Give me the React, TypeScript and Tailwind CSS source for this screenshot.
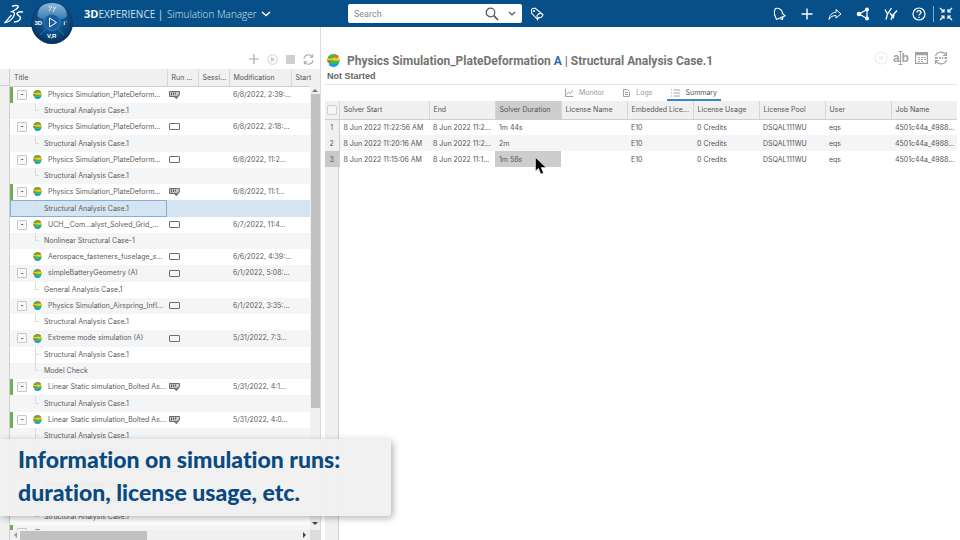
import type { ReactNode } from "react";

type Row = { title: string; child?: boolean; last?: boolean; leaf?: boolean; green?: boolean; run?: "queue" | "box"; date?: string; selected?: boolean };

const sac: Row = { title: "Structural Analysis Case.1", child: true, last: true };

const rows: Row[] = [
  { title: "Physics Simulation_PlateDeform...", green: true, run: "queue", date: "6/8/2022, 2:39:..." },
  sac,
  { title: "Physics Simulation_PlateDeform...", run: "box", date: "6/8/2022, 2:18:..." },
  sac,
  { title: "Physics Simulation_PlateDeform...", run: "box", date: "6/8/2022, 11:2..." },
  sac,
  { title: "Physics Simulation_PlateDeform...", green: true, run: "queue", date: "6/8/2022, 11:1..." },
  { ...sac, selected: true },
  { title: "UCH__Com...alyst_Solved_Grid_...", run: "box", date: "6/7/2022, 11:4..." },
  { title: "Nonlinear Structural Case-1", child: true, last: true },
  { title: "Aerospace_fasteners_fuselage_s...", leaf: true, run: "box", date: "6/6/2022, 4:39:..." },
  { title: "simpleBatteryGeometry (A)", run: "box", date: "6/1/2022, 5:08:..." },
  { title: "General Analysis Case.1", child: true, last: true },
  { title: "Physics Simulation_Airspring_Infl...", run: "box", date: "6/1/2022, 3:35:..." },
  sac,
  { title: "Extreme mode simulation (A)", run: "box", date: "5/31/2022, 7:3..." },
  { title: "Structural Analysis Case.1", child: true },
  { title: "Model Check", child: true, last: true },
  { title: "Linear Static simulation_Bolted As...", green: true, run: "queue", date: "5/31/2022, 4:1..." },
  sac,
  { title: "Linear Static simulation_Bolted As...", green: true, run: "queue", date: "5/31/2022, 4:0..." },
  { title: "Structural Analysis Case.1", child: true },
  { title: "Structural Analysis Case.2", child: true, last: true },
  { title: "Linear Static simulation_Bolted_...", run: "box", date: "5/31/2022, 3:5..." },
  sac,
  { title: "Linear Static simulation_Bolted_...", run: "box", date: "5/31/2022, 3:2..." },
  sac,
  { title: "", green: true },
];

const runs = [
  ["8 Jun 2022 11:22:56 AM", "8 Jun 2022 11:2...", "1m 44s"],
  ["8 Jun 2022 11:20:16 AM", "8 Jun 2022 11:2...", "2m"],
  ["8 Jun 2022 11:15:06 AM", "8 Jun 2022 11:1...", "1m 58s"],
];

const heads = ["Solver Start", "End", "Solver Duration", "License Name", "Embedded Lice...", "License Usage", "License Pool", "User", "Job Name"];

function Svg({ children, w = 14, h = 14, className = "" }: { children: ReactNode; w?: number; h?: number; className?: string }) {
  return (
    <svg width={w} height={h} viewBox={`0 0 ${w} ${h}`} fill="none" stroke="currentColor" strokeWidth="1.2" className={`shrink-0 ${className}`} aria-hidden="true">
      {children}
    </svg>
  );
}

function SimIcon({ size = 9 }: { size?: number }) {
  return (
    <svg width={size} height={size} viewBox="0 0 12 12" className="shrink-0" aria-hidden="true">
      <path d="M3 .8 7 0l3.500 1.500L9.500 4l2.500 1-1.500 5-4.500 2-4-1.500L1.500 8 0 6l1-3.500z" fill="#3dbb52" />
      <path d="M1.500 2.200 5.500 0 7 2 3.500 4z" fill="#57b436" />
      <path d="M6.500 0 10.500 1.500l.3 2-3.500.3L6 2.300z" fill="#f0672c" />
      <path d="M0 4l3.500.3L7 3.300l4.500 1.200.3 1.500L7.500 6.200 4 5.500 0 6.500z" fill="#f3d21c" />
      <path d="M0 5.500 2.500 5.800 3.500 7.300.8 8z" fill="#e5582c" />
      <path d="M2 9l4 .3 4.800-1L9 11.200 6 12l-3-1z" fill="#1d9be0" />
    </svg>
  );
}

function RunIcon({ kind }: { kind: "queue" | "box" }) {
  return kind === "box" ? (
    <Svg w={11} h={7}><rect x="0.500" y="0.500" width="10" height="6" rx="0.500" strokeWidth="1" /></Svg>
  ) : (
    <Svg w={11} h={9}>
      <path d="M.500 1.500h10v3L8 6.500H.500z" fill="#c9c9c9" strokeWidth="1" />
      <path d="M2.500 2.500v3M4.500 2.500v2.500M6.500 2.500v2" stroke="#5f5f5f" strokeWidth="1" />
      <path d="M5 6 7.500 8.300 10.500 4.500" strokeWidth="1.200" />
    </Svg>
  );
}

function IconButton({ label, children }: { label: string; children: ReactNode }) {
  return <button type="button" aria-label={label} className="flex size-4 items-center justify-center">{children}</button>;
}

function Header() {
  return (
    <header className="relative flex h-[27px] shrink-0 items-center bg-[#074f88] font-['Open_Sans',sans-serif] text-[10px] text-[#cfe3f0]">
      <Svg w={20} h={20} className="ml-1 text-white">
        <path d="M8 2.300C11 1 15 1.200 14.200 3 13.500 4.600 11 6 8.500 7.300" strokeWidth="1.400" />
        <path d="M6.500 7.800C10 7 11.500 9 9.500 12.500 7.500 16 4 18.300 1 18.500L7.500 11" strokeWidth="1.300" />
        <path d="M19 8c-3-.8-6 .2-6 1.800 0 1.700 3.800 2 3.500 4.200-.3 2.300-3.500 3.800-6.500 4" strokeWidth="1.500" />
      </Svg>
      <button type="button" aria-label="Compass" className="absolute top-0 left-[30px]">
        <svg width="44" height="45" viewBox="0 0 44 45" aria-hidden="true">
          <defs>
            <radialGradient id="ball" cx="50%" cy="40%" r="60%"><stop offset="0.300" stopColor="#1263a0" /><stop offset="1" stopColor="#062f5c" /></radialGradient>
            <linearGradient id="gloss" x1="0" y1="0" x2="0" y2="1"><stop offset="0" stopColor="#8cb8da" /><stop offset="1" stopColor="#3a7db2" /></linearGradient>
          </defs>
          <circle cx="22" cy="23" r="21" fill="url(#ball)" />
          <path d="M7.500 16C7.500 6 15 3 22 3s15 3 15 13c-2 3-5 3-7 3-2-3-5-4.500-8-4.500S16 16 14 19c-3 0-5-1-6.500-3z" fill="url(#gloss)" />
          <circle cx="22" cy="22.500" r="8" fill="#175f9c" stroke="#3f83b8" strokeWidth="0.800" />
          <path d="M10 35l6-6M34 35l-6-6" stroke="#2b73ad" />
          <path d="M19.500 18v9l7-4.500z" fill="none" stroke="#fff" />
          <path d="M19 6l1.500 2.500L22 6M20.500 8.500 19 11M23 7l1.500 2L26 6.500M24.500 9 23 12" fill="none" stroke="#d9e9f5" strokeWidth="1" />
          <g fill="#fff" fontFamily="Liberation Sans, sans-serif" fontWeight="700" fontSize="6">
            <text x="4.500" y="25">3D</text><text x="33.500" y="25">i&#8125;</text><text x="17" y="38">V,R</text>
          </g>
        </svg>
      </button>
      <span className="ml-[60px] w-[83px] whitespace-nowrap"><b className="text-[11px] text-white">3D</b>EXPERIENCE |</span>
      <button type="button" className="flex items-center gap-1 font-light whitespace-nowrap">
        Simulation Manager
        <Svg w={10} h={6} className="text-white"><path d="M1 1l4 3.500L9 1" strokeWidth="1.500" /></Svg>
      </button>
      <form className="absolute left-[348px] flex h-[19px] w-[174px] items-center rounded-xs bg-white pr-[2px] text-[#555]">
        <input aria-label="Search" placeholder="Search" className="min-w-0 flex-1 pl-1.5 font-['Roboto',sans-serif] text-[9px] outline-none placeholder:text-[#8a8a8a]" />
        <IconButton label="Run search"><Svg><circle cx="5.500" cy="5.500" r="4.300" /><path d="M8.700 8.700 13 13" strokeWidth="1.700" /></Svg></IconButton>
        <span className="w-1" />
        <IconButton label="Search options"><Svg w={8} h={6}><path d="M1 1l3 3 3-3" /></Svg></IconButton>
      </form>
      <div className="absolute left-[529px] text-white">
        <IconButton label="Tags"><Svg><path d="M1.500 2 5 1l6 5M1.500 2v4l6 6.500M7 8.500c1.500-2 4-2.500 6-1-.5 2.500-2.500 3.500-4 3l-1.500 2z" strokeWidth="1.100" /><circle cx="4" cy="4" r="0.500" /></Svg></IconButton>
      </div>
      <nav className="mr-[6px] ml-auto flex items-center gap-3 text-white">
        <IconButton label="Notifications"><Svg><path d="M3.500 1.500C7.500.500 10.500 3.500 10.500 6.500l2.500 2.300L4.500 12.500 3.300 9.500C2 7 2.300 3.500 3.500 1.500zM8.500 12l2 .3.500-1.800" strokeWidth="1.100" /></Svg></IconButton>
        <IconButton label="Add"><Svg w={12} h={12}><path d="M6 .5v11M.5 6h11" strokeWidth="1.400" /></Svg></IconButton>
        <IconButton label="Share"><Svg><path d="M1 12.500C1.500 8 4 5.500 8 5.300V2.500l5 4.500-5 4V8.500C5 8.500 2.500 9.500 1 12.500z" strokeWidth="1" /></Svg></IconButton>
        <IconButton label="Collaborate"><Svg><path d="M11 2.500 3 7l8 4.500z" strokeWidth="1.200" /><g fill="currentColor" stroke="none"><circle cx="11" cy="2.500" r="2" /><circle cx="3" cy="7" r="2.300" /><circle cx="11" cy="11.500" r="2" /></g></Svg></IconButton>
        <IconButton label="Communities"><Svg><path d="M1 2.500l2.500 4.500L7.500 1M3.500 7 2 12.500M6 6l2.200 3L13 3.500M8.200 9 7 13M10 7.500l-1 4" strokeWidth="1.300" /></Svg></IconButton>
        <IconButton label="Help"><Svg><circle cx="7" cy="7" r="6" /><path d="M5 5.500C5 3 9 3 9 5.300 9 7 7 6.800 7 8.500M7 9.700v1.300" strokeWidth="1.300" /></Svg></IconButton>
        <div className="flex items-center gap-1">
          <span className="-ml-[6px] h-4 w-px bg-[#7fa9c9]" />
          <IconButton label="Exit full screen"><Svg><path d="M1 1l4 4M5 2v3H2M13 1 9 5M9 2v3h3M1 13l4-4M5 12V9H2M13 13 9 9M9 12V9h3" strokeWidth="1.200" /></Svg></IconButton>
        </div>
      </nav>
    </header>
  );
}

function Refresh({ size = 12 }: { size?: number }) {
  return (
    <svg width={size} height={size} viewBox="0 0 12 12" fill="none" stroke="currentColor" strokeWidth="1.200" aria-hidden="true">
      <path d="M1 5A5 5 0 0 1 10 3M11 7A5 5 0 0 1 2 9M10.500.500v3H7.500M1.500 11.500v-3h3" />
    </svg>
  );
}

function SimulationList() {
  return (
    <section className="flex w-[321px] shrink-0 flex-col border-r border-[#dcdcdc] pt-5">
      <div className="flex h-[22px] items-end justify-end gap-[2px] pr-1 pb-[2px] text-[#a9a9a9]">
        <IconButton label="New"><Svg w={10} h={10}><path d="M5 0v10M0 5h10" /></Svg></IconButton>
        <IconButton label="Run"><Svg w={11} h={11} className="text-[#cfcfcf]"><circle cx="5.500" cy="5.500" r="4.800" strokeWidth="1" /><path d="M4 3v5l4-2.500z" fill="currentColor" strokeWidth="0.500" /></Svg></IconButton>
        <IconButton label="Stop"><span className="size-[9px] bg-[#cfcfcf]" /></IconButton>
        <IconButton label="Refresh"><Refresh size={11} /></IconButton>
      </div>
      <div className="flex min-h-0 flex-1">
        <div className="w-[10px] shrink-0 border-r border-[#cfcfcf] bg-[#f0f0f0]"><div className="h-[17px] border-b border-[#cfcfcf]" /></div>
        <div className="flex min-w-0 flex-1 flex-col">
          <div className="relative min-h-0 flex-1 overflow-hidden">
            <table className="w-full table-fixed text-left whitespace-nowrap">
              <thead>
                <tr className="h-[17px] bg-[#f0f0f0] text-[#555] [&>th]:border-b [&>th]:border-b-[#cfcfcf] [&>th]:pt-px [&>th]:pl-1 [&>th]:font-normal [&>th:not(:last-child)]:border-r [&>th:not(:last-child)]:border-r-[#d9d9d9]">
                  <th className="w-[157px]">Title</th>
                  <th className="w-[31px]">Run ...</th>
                  <th className="w-[31px]">Sessi...</th>
                  <th className="w-[62px]">Modification</th>
                  <th>Start</th>
                </tr>
              </thead>
              <tbody className="[&>tr:nth-child(4n)]:h-[17px]">
                {rows.map((r, i) => (
                  <tr key={i} className={`h-4 ${r.selected ? "bg-[#d3e5f2]" : i % 2 ? "bg-[#f4f5f6]" : "bg-white"}`}>
                    <td className={r.green ? "shadow-[inset_3px_0_0_#6fae53]" : r.selected ? "shadow-[inset_0_0_0_1px_#86aed0]" : ""}>
                      {r.child ? (
                        <div className="flex h-4 items-center pt-px pl-[25px]">
                          <span className={`mr-[5px] w-1 shrink-0 border-l border-[#dcdcdc] ${r.last ? "mb-2 h-2" : "h-4"}`}><span className="block h-2 border-b border-[#dcdcdc]" /></span>
                          {r.title}
                        </div>
                      ) : (
                        <div className="flex h-4 items-center pl-[7px]">
                          {r.leaf ? <span className="w-[10px] shrink-0" /> : <button type="button" aria-label="Collapse" className="flex size-[10px] shrink-0 items-center justify-center rounded-[1px] border border-[#c8c8c8] bg-[#f8f8f8] leading-none text-black">-</button>}
                          <span className="mr-[6px] ml-[6px] flex shrink-0"><SimIcon /></span>
                          {r.title}
                        </div>
                      )}
                    </td>
                    <td className="pl-[2px] text-[#6f6f6f]">{r.run && <RunIcon kind={r.run} />}</td>
                    <td />
                    <td className="pl-1">{r.date}</td>
                    <td />
                  </tr>
                ))}
              </tbody>
            </table>
            <div className="absolute top-[17px] right-0 bottom-0 flex w-[10px] flex-col items-center bg-[#f0f0f0] text-[#777]">
              <Svg w={6} h={4} className="my-[2px]"><path d="M0 4 3 1l3 3z" fill="currentColor" stroke="none" /></Svg>
              <span className="h-[314px] w-[9px] bg-[#c1c1c1]" />
              <Svg w={6} h={4} className="mt-auto mb-1 text-[#444]"><path d="M0 0l3 3 3-3z" fill="currentColor" stroke="none" /></Svg>
            </div>
          </div>
          <div className="flex h-[10px] shrink-0 items-center bg-[#f0f0f0]">
            <Svg w={4} h={6} className="mx-[3px] text-[#999]"><path d="M4 0 1 3l3 3z" fill="currentColor" stroke="none" /></Svg>
            <span className="h-[9px] w-[127px] bg-[#c1c1c1]" />
            <Svg w={4} h={6} className="mr-[3px] ml-auto text-[#444]"><path d="M0 0l3 3-3 3z" fill="currentColor" stroke="none" /></Svg>
            <span className="h-full w-[10px] bg-[#dcdcdc]" />
          </div>
        </div>
      </div>
    </section>
  );
}

function CaseDetails() {
  return (
    <main className="flex min-w-0 flex-1 flex-col pt-[23px] pr-[3px] pl-1">
      <div className="flex h-[21px] items-center pl-[2px]">
        <SimIcon size={13} />
        <h1 className="ml-[7px] font-['Roboto',sans-serif] text-[12px] font-bold whitespace-nowrap text-[#747474]">
          Physics Simulation_PlateDeformation <span className="text-[#2f6cb0]">A</span> | Structural Analysis Case.1
        </h1>
        <div className="mr-[8px] mb-[6px] ml-auto flex gap-1 text-[#a3a3a3]">
          <IconButton label="Abort"><Svg className="text-[#ececec]"><circle cx="7" cy="7" r="6" /><path d="M5 5l4 4M9 5 5 9" /></Svg></IconButton>
          <IconButton label="Rename">
            <svg width="16" height="14" viewBox="0 0 16 14" className="shrink-0" aria-hidden="true">
              <g fill="currentColor" fontFamily="Liberation Sans, sans-serif" fontWeight="700" fontSize="12"><text x="0" y="11">a</text><text x="8.500" y="11">b</text></g>
              <path d="M5.500.500h4M7.500.500v13M5.500 13.500h4" fill="none" stroke="currentColor" />
            </svg>
          </IconButton>
          <IconButton label="Columns"><Svg w={13} h={12}><rect x="0.600" y="0.600" width="11.800" height="10.800" /><path d="M1 2h11" strokeWidth="2.500" /><path d="M3 5.500h2M6 5.500h2M9 5.500h2M3 7.500h2M6 7.500h2M9 7.500h2M3 9.500h2M6 9.500h2" strokeWidth="1" /></Svg></IconButton>
          <IconButton label="Update">
            <Svg>
              <path d="M1.500 5A5.800 5.800 0 0 1 12 4M12.500 9A5.800 5.800 0 0 1 2 10M12.500 1v3.500H9M1.500 13V9.500H5" />
              <path d="M1 7h2.500M5 7h1.500M7.700 7h1.500M10.500 7H13" strokeWidth="1.800" />
            </Svg>
          </IconButton>
        </div>
      </div>
      <p className="h-[14px] border-b border-[#e2e2e2] pl-[2px] font-['Liberation_Sans',sans-serif] text-[9px] leading-[11px] font-bold text-[#666]">Not Started</p>
      <div role="tablist" className="flex h-4 items-stretch justify-center text-[#999] [&>button]:flex [&>button]:items-center [&>button]:gap-[6px] [&>button]:px-1">
        <button type="button" role="tab" className="mr-[11px]"><Svg w={8} h={8}><path d="M.5 0v7.500H8M1.500 5.500l2-2.500 2 1.500L8 1" strokeWidth="0.900" /></Svg>Monitor</button>
        <button type="button" role="tab" className="mr-[10px]"><Svg w={7} h={8}><path d="M.5.500h4l2 2v5h-6zM2 3.500h3M2 5.500h3" strokeWidth="0.900" /></Svg>Logs</button>
        <button type="button" role="tab" aria-selected="true" className="border-b-2 border-[#3d85bd] pt-[2px] text-[#555]"><Svg w={9} h={8} className="text-[#999]"><path d="M0 1h1M2.500 1H9M0 4h1M2.500 4H9M0 7h1M2.500 7H9" strokeWidth="0.900" /></Svg>Summary</button>
      </div>
      <table className="w-full table-fixed text-left whitespace-nowrap text-[#555]">
        <thead>
          <tr className="h-[18px] bg-[#f0f0f0] [&>th]:border-b [&>th]:border-[#cfcfcf] [&>th]:pt-px [&>th]:font-normal [&>th+th]:pl-1 [&>th:not(:last-child)]:border-r [&>th:not(:last-child)]:border-r-[#d6d6d6]">
            <th className="w-[14px]"><input type="checkbox" aria-label="Select all" className="mx-auto block size-[10px] appearance-none rounded-[2px] border border-[#cfcfcf] bg-[#f6f6f6]" /></th>
            {heads.map((h, i) => <th key={h} className={i === 0 ? "w-[90px]" : i === 2 ? "bg-[#cdcdcd]" : ""}>{h}</th>)}
          </tr>
        </thead>
        <tbody>
          {runs.map((r, i) => (
            <tr key={i} className={`h-4 [&>*]:pt-[2px] [&>td]:pl-1 ${i === 1 ? "bg-[#f4f5f6]" : ""}`}>
              <th scope="row" className={`border-r border-[#cfcfcf] text-center font-normal ${i === 2 ? "bg-[#c9c9c9]" : "bg-[#f0f0f0]"}`}>{i + 1}</th>
              <td>{r[0]}</td>
              <td>{r[1]}</td>
              <td className={`relative ${i === 2 ? "bg-[#cdcdcd]" : ""}`}>
                {r[2]}
                {i === 2 && (
                  <svg width="12" height="18" viewBox="0 0 12 18" className="absolute top-[6px] left-[40px] z-10" aria-hidden="true">
                    <path d="M.5.5v13.500l3-2.700 2.300 5.700 2.700-1.100-2.400-5.400H11z" fill="#000" stroke="#fff" strokeWidth="0.500" />
                  </svg>
                )}
              </td>
              <td />
              <td>E10</td>
              <td>0 Credits</td>
              <td>DSQAL111WU</td>
              <td>eqs</td>
              <td>4501c44a_4988...</td>
            </tr>
          ))}
        </tbody>
      </table>
      <div className="w-[14px] flex-1 border-r border-[#cfcfcf] bg-[#f0f0f0]" />
    </main>
  );
}

export default function App() {
  return (
    <div className="relative flex h-screen flex-col overflow-hidden bg-white font-['Inter',sans-serif] text-[7px] leading-[12px] text-[#5c5c5c]">
      <Header />
      <div className="flex min-h-0 flex-1">
        <SimulationList />
        <CaseDetails />
      </div>
      <aside className="absolute bottom-6 left-0 z-20 h-[77px] rounded-r-sm bg-[#f0f0f0]/94 pt-1 pr-[51px] pl-[18px] font-['Lato',sans-serif] text-[23px] leading-[33px] font-black text-[#0a4a80] shadow-[2px_2px_7px_rgba(0,0,0,0.3)]">
        <p className="[font-variant-ligatures:none]">Information on simulation runs:<br />duration, license usage, etc.</p>
      </aside>
    </div>
  );
}
